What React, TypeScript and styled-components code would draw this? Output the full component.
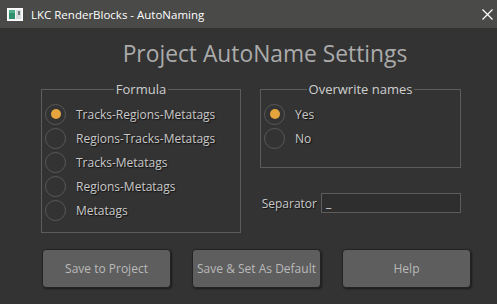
import { FC } from 'react';
import styled, { createGlobalStyle } from 'styled-components';

const GlobalStyle = createGlobalStyle`
  html, body {
    margin: 0;
    padding: 0;
    background: #333333;
  }
  * {
    box-sizing: border-box;
  }
`;

const Window = styled.div`
  width: 497px;
  height: 304px;
  display: flex;
  flex-direction: column;
  background: #333333;
  font-family: "Open Sans", "Noto Sans", sans-serif;
  overflow: hidden;
`;

const TitleBar = styled.div`
  height: 28px;
  flex-shrink: 0;
  display: flex;
  align-items: center;
  padding: 0 0 0 7px;
  background: #4a4a48;
  color: #ffffff;
  font-size: 11.5px;
`;

const TitleText = styled.span`
  margin-left: 8px;
  flex: 1;
`;

const CloseButton = styled.div`
  width: 46px;
  height: 28px;
  display: flex;
  align-items: center;
  justify-content: center;
  padding-left: 26px;
`;

const Body = styled.div`
  flex: 1;
  display: flex;
  flex-direction: column;
  padding: 0 36px 0 41px;
`;

const Heading = styled.h1`
  margin: 11px 0 0;
  height: 30px;
  line-height: 30px;
  text-align: center;
  font-size: 22.8px;
  font-weight: 400;
  color: #ababab;
  padding-left: 28px;
  white-space: nowrap;
`;

const GroupsRow = styled.div`
  display: flex;
  gap: 19px;
  margin-top: 11px;
`;

const Column = styled.div`
  display: flex;
  flex-direction: column;
`;

const Group = styled.fieldset<{ $height: number }>`
  width: 201px;
  height: ${({ $height }) => $height}px;
  margin: 0;
  padding: 4px 3px 0;
  border: 1px solid #5c5c5c;
  display: flex;
  flex-direction: column;
`;

const Legend = styled.legend`
  margin: 0 auto;
  padding: 0 2px;
  height: 18px;
  line-height: 18px;
  font-size: 13px;
  color: #cfcfcf;
`;

const Option = styled.label`
  height: 24px;
  display: flex;
  align-items: center;
  gap: 10px;
  font-size: 12px;
  color: #c9c9c9;
  text-shadow: 1px 1px 1px #111;
`;

const RadioCircle = styled.span<{ $checked?: boolean }>`
  width: 21px;
  height: 21px;
  border-radius: 50%;
  border: 1px solid #585858;
  display: flex;
  align-items: center;
  justify-content: center;
  flex-shrink: 0;

  &::after {
    content: '';
    width: 10px;
    height: 10px;
    border-radius: 50%;
    background: ${({ $checked }) => ($checked ? '#e5a43c' : 'transparent')};
  }
`;

const SeparatorRow = styled.div`
  display: flex;
  align-items: center;
  justify-content: flex-end;
  gap: 4px;
  margin-top: 25px;
  font-size: 12px;
  color: #c9c9c9;
  text-shadow: 1px 1px 1px #111;
`;

const SeparatorInput = styled.div`
  width: 140px;
  height: 20px;
  border: 1px solid #5c5c5c;
  background: #2e2e2e;
  padding: 0 4px;
  line-height: 18px;
  font-size: 12px;
  color: #d8d8d8;
  text-shadow: none;
`;

const ButtonsRow = styled.div`
  display: flex;
  gap: 21px;
  margin-top: 16px;
  padding-left: 1px;
`;

const Button = styled.button`
  width: 129px;
  height: 39px;
  flex-shrink: 0;
  border: 1px solid #232323;
  border-radius: 4px;
  background: #5e5e5e;
  color: #b9b9b9;
  font-family: "Open Sans", "Noto Sans", sans-serif;
  font-size: 12px;
  box-shadow: 1px 1px 2px rgba(0, 0, 0, 0.5);
  padding: 0;
`;

const AppIcon: FC = () => (
  <svg width="16" height="13" viewBox="0 0 16 13">
    <rect x="0.5" y="0.5" width="15" height="12" fill="#f4f4f4" stroke="#ffffff" />
    <rect x="2" y="2" width="6" height="9" fill="#2f8f6e" />
    <rect x="2" y="2" width="6" height="3" fill="#4fae8a" />
    <rect x="9" y="2" width="5" height="9" fill="#d8dcdc" />
    <rect x="11" y="3" width="2" height="4" fill="#6a7a7a" />
  </svg>
);

const CloseIcon: FC = () => (
  <svg width="11" height="11" viewBox="0 0 11 11">
    <path d="M0.5 0.5 L10.5 10.5 M10.5 0.5 L0.5 10.5" stroke="#ffffff" strokeWidth="1.2" />
  </svg>
);

interface RadioProps {
  label: string;
  checked?: boolean;
}

const Radio: FC<RadioProps> = ({ label, checked }) => (
  <Option>
    <RadioCircle $checked={checked} />
    {label}
  </Option>
);

const formulas = [
  'Tracks-Regions-Metatags',
  'Regions-Tracks-Metatags',
  'Tracks-Metatags',
  'Regions-Metatags',
  'Metatags',
];

const App: FC = () => (
  <>
    <GlobalStyle />
    <Window>
      <TitleBar>
        <AppIcon />
        <TitleText>LKC RenderBlocks - AutoNaming</TitleText>
        <CloseButton>
          <CloseIcon />
        </CloseButton>
      </TitleBar>
      <Body>
        <Heading>Project AutoName Settings</Heading>
        <GroupsRow>
          <Group $height={153}>
            <Legend>Formula</Legend>
            {formulas.map((f, i) => (
              <Radio key={f} label={f} checked={i === 0} />
            ))}
          </Group>
          <Column>
            <Group $height={88}>
              <Legend>Overwrite names</Legend>
              <Radio label="Yes" checked />
              <Radio label="No" />
            </Group>
            <SeparatorRow>
              Separator
              <SeparatorInput>_</SeparatorInput>
            </SeparatorRow>
          </Column>
        </GroupsRow>
        <ButtonsRow>
          <Button>Save to Project</Button>
          <Button>Save &amp; Set As Default</Button>
          <Button>Help</Button>
        </ButtonsRow>
      </Body>
    </Window>
  </>
);

export default App;
